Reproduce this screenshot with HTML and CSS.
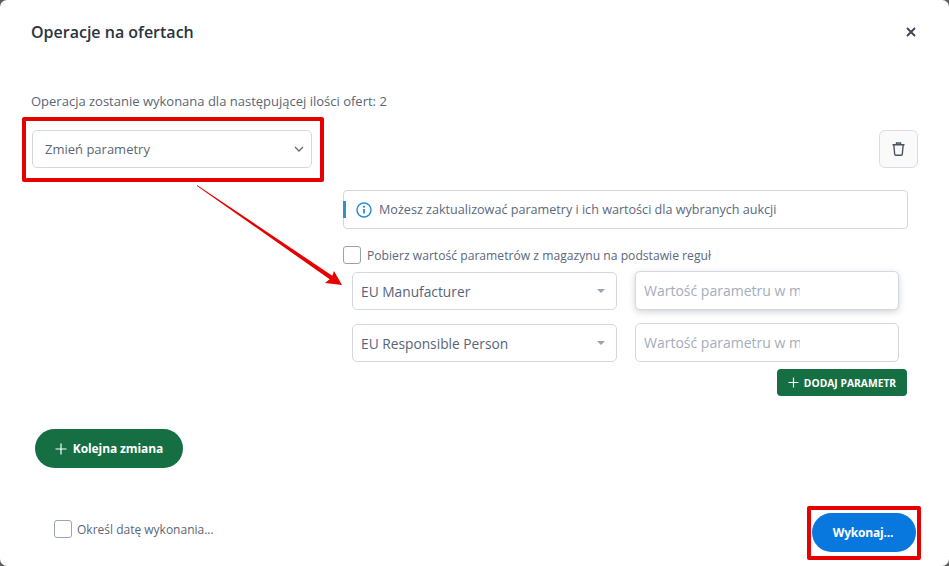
FILE: index.html
```html
<!DOCTYPE html>
<html lang="pl">
<head>
    <meta charset="UTF-8">
    <meta name="viewport" content="width=device-width, initial-scale=1.0">
    <title>Operacje na ofertach</title>
    <link rel="stylesheet" href="styles.css">
</head>
<body>
    <div class="modal">
        <div class="modal-header">
            <h2>Operacje na ofertach</h2>
            <button class="close" aria-label="Zamknij">
                <svg width="10" height="10" viewBox="0 0 10 10"><path d="M1 1l8 8M9 1l-8 8" stroke="#3c4653" stroke-width="1.9" fill="none"/></svg>
            </button>
        </div>

        <p class="count">Operacja zostanie wykonana dla następującej ilości ofert: 2</p>

        <div class="change-row">
            <div class="select select-main">
                <span>Zmień parametry</span>
                <svg width="10" height="6" viewBox="0 0 10 6"><path d="M1 1l4 4 4-4" stroke="#5f6b7a" stroke-width="1.3" fill="none"/></svg>
            </div>
            <button class="trash" aria-label="Usuń">
                <svg width="13" height="14" viewBox="0 0 13 14"><path d="M.5 2.800h12M4.500 2.800V1h4v1.800M1.800 2.800l.9 9.400q.1 1.100 1.100 1.100h5.400q1 0 1.100-1.100l.9-9.400" stroke="#4a5460" stroke-width="1.400" fill="none"/></svg>
            </button>
        </div>

        <div class="params">
            <div class="alert">
                <svg width="16" height="16" viewBox="0 0 16 16"><circle cx="8" cy="8" r="7" stroke="#2f8fd0" stroke-width="1.500" fill="none"/><path d="M8 7v4.500" stroke="#2f8fd0" stroke-width="1.800"/><circle cx="8" cy="4.700" r="1.100" fill="#2f8fd0"/></svg>
                <span>Możesz zaktualizować parametry i ich wartości dla wybranych aukcji</span>
            </div>

            <label class="check check-rules"><span class="box"></span>Pobierz wartość parametrów z magazynu na podstawie reguł</label>

            <div class="param-row">
                <div class="select select-param"><span>EU Manufacturer</span><i class="caret"></i></div>
                <input class="value value-active" type="text" placeholder="Wartość parametru w magazynie">
            </div>
            <div class="param-row">
                <div class="select select-param"><span>EU Responsible Person</span><i class="caret"></i></div>
                <input class="value" type="text" placeholder="Wartość parametru w magazynie">
            </div>
            <div class="param-add">
                <button class="btn-add">
                    <svg width="11" height="11" viewBox="0 0 11 11"><path d="M5.500 .5v10M.5 5.500h10" stroke="#fff" stroke-width="1.200"/></svg>
                    DODAJ PARAMETR
                </button>
            </div>
        </div>

        <button class="btn-next">
            <svg width="12" height="12" viewBox="0 0 12 12"><path d="M6 .5v11M.5 6h11" stroke="#fff" stroke-width="1.200"/></svg>
            Kolejna zmiana
        </button>

        <div class="modal-footer">
            <label class="check"><span class="box"></span>Określ datę wykonania...</label>
            <button class="btn-run">Wykonaj...</button>
        </div>

        <!-- adnotacje na zrzucie -->
        <div class="mark mark-select"></div>
        <div class="mark mark-run"></div>
        <svg class="arrow" width="949" height="566" viewBox="0 0 949 566">
            <polygon points="197,185 332.300,275.700 334,271 342,285 325,283 329.700,279.300 197,186" fill="#e60000"/>
        </svg>
    </div>
</body>
</html>
```

FILE: styles.css
```css
* { box-sizing: border-box; }
html, body { margin: 0; height: 100%; }
body { background: #5c5c5c; font-family: "Open Sans", sans-serif; color: #4d5a6b; overflow: hidden; }
button { font-family: inherit; cursor: pointer; }

.modal { position: relative; height: 566px; background: #fff; border-radius: 7px; padding: 0 31px 0 32px; }

.modal-header { height: 63px; display: flex; align-items: center; justify-content: space-between; margin-left: -1px; padding-right: 2px; }
.modal-header h2 { margin: 0; font-size: 16px; font-weight: 600; color: #2b3440; }
.close { border: none; background: none; padding: 0; width: 10px; height: 10px; display: flex; margin-top: 1px; }

.count { margin: 30px 0 0 -1px; font-size: 13px; line-height: 17px; color: #5b6675; }

.change-row { margin-top: 20px; display: flex; justify-content: space-between; }

.select { display: flex; align-items: center; justify-content: space-between; background: #fff; border: 1px solid #d3d8e0; border-radius: 5px; }
.select-main { width: 280px; height: 38px; padding: 0 7px 0 12px; font-size: 13px; color: #5b6675; }
.select-param { width: 265px; height: 38px; padding: 1px 11px 0 8px; font-size: 13.750px; color: #56647a; }
.caret { width: 0; height: 0; margin-top: -1px; border-left: 4.500px solid transparent; border-right: 4.500px solid transparent; border-top: 4.500px solid #9aa3ae; }

.trash { width: 39px; height: 38px; display: flex; align-items: center; justify-content: center; padding: 0; background: #fafafa; border: 1px solid #d9dde3; border-radius: 6px; }

.params { width: 565px; margin: 22px 0 0 311px; }

.alert { height: 39px; display: flex; align-items: center; gap: 7px; padding-left: 12px; border: 1px solid #d3d8e0; border-radius: 4px; font-size: 12.600px; color: #5b6880; position: relative; }
.alert::before { content: ""; position: absolute; left: -1px; top: 10px; width: 3px; height: 17px; background: #2f8fd0; }

.check { display: flex; align-items: center; gap: 6px; font-size: 12.150px; color: #5b6880; }
.box { width: 18px; height: 18px; flex: none; border: 1px solid #9aa3b0; border-radius: 3px; background: #fff; }
.check-rules { margin-top: 17px; height: 18px; }

.param-row { display: flex; gap: 18px; margin: 13px 0 0 9px; align-items: center; }
.check-rules + .param-row { margin-top: 7px; }
.value { width: 264px; height: 39px; padding: 0 98px 0 8px; border: 1px solid #d3d8e0; border-radius: 5px; font-family: inherit; font-size: 14px; color: #56647a; outline: none; }
.value::placeholder { color: #a3adbd; opacity: 1; }
.value-active { box-shadow: 0 2px 6px rgba(70, 80, 100, .25); }

.param-add { display: flex; justify-content: flex-end; margin-top: 7px; padding-right: 1px; }
.btn-add { width: 130px; height: 27px; display: flex; align-items: center; justify-content: center; gap: 5px; padding: 0; border: none; border-radius: 4px; background: #166f43; color: #fff; font-size: 10.300px; font-weight: 700; }

.btn-next { display: flex; align-items: center; justify-content: center; gap: 6px; width: 148px; height: 39px; margin: 33px 0 0 3px; padding: 0; border: none; border-radius: 20px; background: #166f43; color: #fff; font-size: 12px; font-weight: 700; letter-spacing: -.1px; }

.modal-footer { display: flex; justify-content: space-between; align-items: center; margin: 45px 2px 0 22px; }
.btn-run { width: 104px; height: 39px; padding: 0 2px 0 0; border: none; border-radius: 20px; background: #0878de; color: #fff; font-size: 12px; font-weight: 700; letter-spacing: -.2px; }
.modal-footer .check { color: #5b6675; font-size: 12px; gap: 5px; margin-bottom: 7px; }

.mark { position: absolute; border: 4px solid #e60000; border-radius: 2px; pointer-events: none; }
.mark-select { left: 22px; top: 117px; width: 302px; height: 65px; }
.mark-run { left: 807px; top: 506px; width: 114px; height: 54px; }
.arrow { position: absolute; left: 0; top: 0; pointer-events: none; }
```
